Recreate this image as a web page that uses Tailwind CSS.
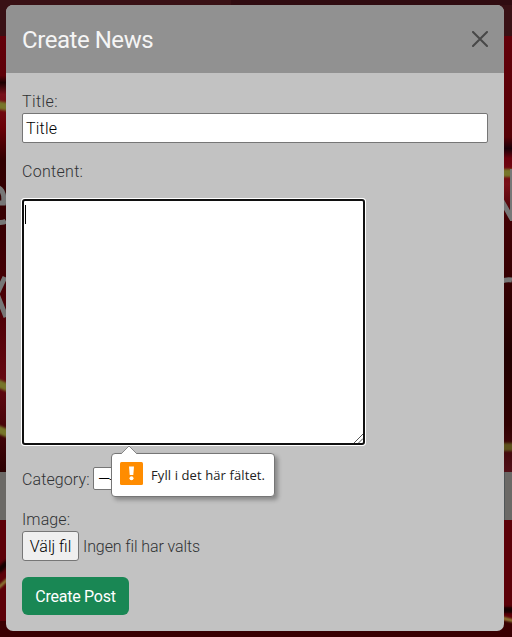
<!DOCTYPE html>
<html lang="sv">
<head>
<meta charset="utf-8">
<title>Create News</title>
<script src="https://cdn.jsdelivr.net/npm/@tailwindcss/browser@4"></script>
</head>
<body class="relative w-[512px] h-[637px] overflow-hidden bg-[#400003] font-['Roboto',sans-serif] text-[16px] leading-[24px] font-light text-[#303234]">
<!-- page behind the dialog -->
<svg class="absolute inset-0" width="512" height="637" viewBox="0 0 512 637" aria-hidden="true">
  <defs>
    <linearGradient id="l" x1="0" y1="0" x2="0" y2="1">
      <stop offset="0" stop-color="#68000b"/><stop offset=".16" stop-color="#5e0008"/><stop offset=".175" stop-color="#1c0001"/><stop offset=".2" stop-color="#77101a"/><stop offset=".27" stop-color="#6a0007"/><stop offset=".34" stop-color="#300000"/><stop offset=".5" stop-color="#3a0003"/><stop offset=".65" stop-color="#4c0006"/><stop offset=".8" stop-color="#650812"/><stop offset="1" stop-color="#2a0001"/>
    </linearGradient>
    <linearGradient id="r" x1="0" y1="0" x2="0" y2="1">
      <stop offset="0" stop-color="#68000b"/><stop offset=".29" stop-color="#560006"/><stop offset=".315" stop-color="#180008"/><stop offset=".335" stop-color="#6a000c"/><stop offset=".39" stop-color="#7a1018"/><stop offset=".46" stop-color="#420004"/><stop offset=".6" stop-color="#350002"/><stop offset=".75" stop-color="#200000"/><stop offset=".9" stop-color="#300001"/><stop offset="1" stop-color="#521018"/>
    </linearGradient>
    <filter id="b"><feGaussianBlur stdDeviation="1.2"/></filter>
  </defs>
  <rect width="8" height="472" y="0" fill="url(#l)"/>
  <rect x="503" y="0" width="9" height="472" fill="url(#r)"/>
  <rect width="512" height="36" fill="#391115"/><rect x="231" width="281" height="5" fill="#300c11"/>
  <g filter="url(#b)" fill="none" stroke="#77762a" stroke-width="8">
    <path d="M-3 105L9 107M-3 383L9 388M-3 429L9 434M502 173H514"/><path d="M502 447H514" stroke="#5b511c"/>
  </g>
  <rect y="472" width="512" height="48" fill="#6b6966"/><path d="M504.500 472v48" stroke="#505557"/>
  <rect y="520" width="512" height="117" fill="#5c0008"/>
  <rect y="621" width="512" height="16" fill="#3a0002"/>
  <g filter="url(#b)" fill="none"><path d="M-2 571L8 562M502 610H514" stroke="#180005" stroke-width="6"/><path d="M-2 588L8 579M502 618L514 621" stroke="#91863b" stroke-width="3"/></g>
  <g fill="none" stroke="#777" stroke-width="5"><path d="M-8 203H3.500C5 193 1 187-5 187M-8 221Q2 224 6 221" /><path d="M5 277L-3 294L6 317"/><path d="M498 194L512 219M512.500 169V221" /><path d="M502 281Q507 279 512 280"/></g>
</svg>

<main class="relative ml-[6px] mt-[5px] w-[498px] h-[626px] rounded-[7px] bg-[#c2c2c2] overflow-hidden">
  <header class="h-[68px] px-4 flex items-center justify-between bg-[#919191]">
    <h1 class="text-[24px] leading-[30px] font-normal tracking-[-0.45px] text-[#f5f5f5] pt-[2px]">Create News</h1>
    <button type="button" aria-label="Close" class="w-4 h-4"><svg width="16" height="16" viewBox="0 0 16 16" fill="none" stroke="#484848" stroke-width="2" stroke-linecap="round"><path d="M1 1L15 15M15 1L1 15"/></svg></button>
  </header>
  <form class="px-4 pt-4">
    <label class="block h-[19px] leading-[25px] tracking-[0.4px]">Title:</label>
    <div class="mt-[5px] h-[30px] w-[466px] border border-[#767676] rounded-[2px] bg-white px-[3px] leading-[29px] tracking-[0.2px] text-black">Title</div>
    <label class="block mt-4 h-[24px] leading-[25px] tracking-[0.3px]">Content:</label>
    <div class="relative mt-[15px] -ml-px h-[248px] w-[345px] rounded-[3px] border border-white bg-white">
      <div class="h-[246px] w-[343px] rounded-[3px] border-2 border-[#101010] pl-px pt-[4px]"><div class="w-px h-[19px] bg-black"></div></div>
      <svg class="absolute right-[2px] bottom-[2px]" width="9" height="9" viewBox="0 0 9 9" stroke="#555" fill="none"><path d="M0 9L9 0M4.500 9L9 4.500"/></svg>
    </div>
    <div class="mt-[21px] h-[24px] flex items-center"><label class="w-[71px] leading-[24px] pt-[2px] tracking-[0.1px] whitespace-nowrap">Category:</label><div class="h-[23px] w-[90px] border border-[#767676] rounded-[2px] bg-white pl-1 leading-[23px] text-black -mt-[2px] whitespace-nowrap tracking-[-1px]">—----</div></div>
    <label class="block mt-4 h-[24px] leading-[26px] tracking-[0.1px]">Image:</label>
    <div class="h-[30px] flex items-center"><span class="h-[30px] w-[57px] border border-[#767676] rounded-[3px] bg-[#efefef] text-black text-center leading-[30px]">Välj fil</span><span class="ml-1 leading-[30px] pt-[2px] tracking-[-0.1px]">Ingen fil har valts</span></div>
    <button type="button" class="mt-4 block h-[38px] w-[107px] rounded-[6px] bg-[#198754] text-white font-normal tracking-[-0.25px] pt-[2px] whitespace-nowrap">Create Post</button>
  </form>
</main>

<!-- validation tooltip -->
<div role="alert" class="absolute left-[111px] top-[453px] w-[164px] h-[44px] rounded-[4px] border border-[#767676] bg-white shadow-[3px_3px_4px_rgba(0,0,0,0.3)] flex items-center pl-2">
  <svg class="absolute left-[8px] -top-[9px]" width="18" height="10" viewBox="0 0 18 10"><path d="M0 10L9 1L18 10Z" fill="#fff"/><path d="M1 9L9 1L17 9" fill="none" stroke="#898989"/></svg>
  <svg class="-mt-[3px]" width="23" height="23" viewBox="0 0 23 23"><rect width="23" height="23" rx="1.500" fill="#ff8c00"/><path d="M9 4.500H14L13.300 13H9.700Z" fill="#fff"/><circle cx="11.500" cy="16.300" r="2" fill="#fff"/></svg>
  <span class="ml-[8px] font-['Open_Sans',sans-serif] font-normal text-[13px] tracking-[0.1px] text-[#222] whitespace-nowrap">Fyll i det här fältet.</span>
</div>
</body>
</html>
